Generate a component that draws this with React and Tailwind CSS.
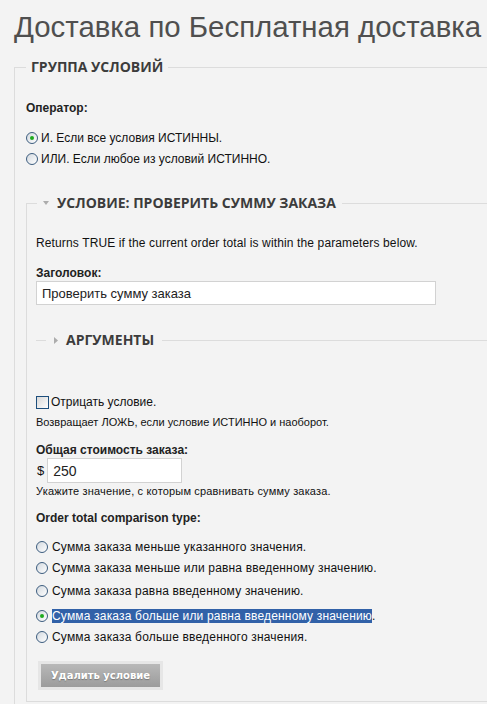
import React from "react";

function Radio({ checked }) {
    return (
        <span className="flex h-[12px] w-[12px] shrink-0 items-center justify-center rounded-full border border-[#3d5d7f] bg-linear-to-br from-[#d3d9df] to-white">
            {checked && <span className="h-[4px] w-[4px] rounded-full bg-[#1faa1f]" />}
        </span>
    );
}

function Legend({ children, arrow, className = "" }) {
    return (
        <legend className={`flex items-center font-['Open_Sans',sans-serif] text-[14px] leading-[16px] font-bold text-[#3c3c3c] ${className}`}>
            {arrow === "down" && (
                <svg width="6" height="4" viewBox="0 0 6 4" className="mr-[8px]">
                    <path d="M0 0h6L3 4z" fill="#acacac" />
                </svg>
            )}
            {arrow === "right" && (
                <svg width="4" height="7" viewBox="0 0 4 7" className="mr-[8px]">
                    <path d="M0 0l4 3.5L0 7z" fill="#acacac" />
                </svg>
            )}
            {children}
        </legend>
    );
}

const options = [
    { label: "Сумма заказа меньше указанного значения.", mt: "mt-[13px]" },
    { label: "Сумма заказа меньше или равна введенному значению.", mt: "mt-[5px]" },
    { label: "Сумма заказа равна введенному значению.", mt: "mt-[7px]" },
    { label: "Сумма заказа больше или равна введенному значению", checked: true, mt: "mt-[9px]" },
    { label: "Сумма заказа больше введенного значения.", mt: "mt-[5px]" },
];

export default function App() {
    return (
        <div className="h-[704px] w-[487px] overflow-hidden bg-[#f3f3f3] font-['Liberation_Sans',Arial,sans-serif] text-[12px] text-[#111]">
            {/* Page title */}
            <h1 className="ml-[14px] pt-[11px] text-[29.4px] leading-[32px] whitespace-nowrap text-[#4f4f4f]">
                Доставка по Бесплатная доставка
            </h1>

            {/* Condition group */}
            <fieldset className="mt-[16px] ml-[14px] w-[520px] border border-r-0 border-[#dcdcdc] pl-[11px] pb-[40px]">
                <Legend className="px-[5px]">ГРУППА УСЛОВИЙ</Legend>

                <p className="mt-[25px] leading-[16px] font-bold text-[#222]">Оператор:</p>
                <div className="mt-[13px] flex h-[18px] items-center gap-[3px]">
                    <Radio checked />
                    <span>И. Если все условия ИСТИННЫ.</span>
                </div>
                <div className="mt-[3px] flex h-[18px] items-center gap-[3px]">
                    <Radio />
                    <span>ИЛИ. Если любое из условий ИСТИННО.</span>
                </div>

                {/* Single condition */}
                <fieldset className="mt-[27px] w-[480px] border border-r-0 border-[#dcdcdc] pl-[9px] pb-[11px]">
                    <Legend arrow="down" className="ml-[1px] px-[6px]">УСЛОВИЕ: ПРОВЕРИТЬ СУММУ ЗАКАЗА</Legend>

                    <p className="mt-[24px] leading-[16px] tracking-[0.13px]">Returns TRUE if the current order total is within the parameters below.</p>

                    <p className="mt-[14px] leading-[16px] font-bold text-[#222]">Заголовок:</p>
                    <input
                        readOnly
                        value="Проверить сумму заказа"
                        className="block h-[24px] w-[400px] border border-[#d2d2d2] bg-white px-[5px] text-[13px] text-[#222] outline-none"
                    />

                    <fieldset className="mt-[27px] border-t border-[#dcdcdc]">
                        <Legend arrow="right" className="ml-[10px] px-[8px]">АРГУМЕНТЫ</Legend>
                    </fieldset>

                    <div className="mt-[46px] flex h-[16px] items-center gap-[2px]">
                        <span className="h-[13px] w-[13px] shrink-0 border border-[#1d4e7c] bg-linear-to-br from-[#d8d8d8] to-white" />
                        <span>Отрицать условие.</span>
                    </div>
                    <p className="mt-[5px] text-[11px] leading-[14px]">Возвращает ЛОЖЬ, если условие ИСТИННО и наоборот.</p>

                    <p className="mt-[14px] leading-[15px] font-bold text-[#222]">Общая стоимость заказа:</p>
                    <div className="flex items-center gap-[3px] pl-[1px]">
                        <span className="text-[13px]">$</span>
                        <input
                            readOnly
                            value="250"
                            className="block h-[25px] w-[135px] border border-[#d2d2d2] bg-white px-[5px] text-[14px] text-[#222] outline-none"
                        />
                    </div>
                    <p className="mt-[1px] text-[11px] leading-[14px] tracking-[0.17px]">Укажите значение, с которым сравнивать сумму заказа.</p>

                    <p className="mt-[12px] leading-[16px] font-bold text-[#222]">Order total comparison type:</p>
                    {options.map((o) => (
                        <div key={o.label} className={`${o.mt} flex h-[16px] items-center gap-[4px] tracking-[0.18px]`}>
                            <Radio checked={o.checked} />
                            {o.checked ? (
                                <span>
                                    <span className="bg-[#3161a8] text-white">{o.label}</span>.
                                </span>
                            ) : (
                                <span>{o.label}</span>
                            )}
                        </div>
                    ))}

                    <div className="mt-[16px] ml-[2px] w-[125px] bg-[#e6e6e6] p-[3px]">
                        <button className="block h-[23px] w-full bg-linear-to-b from-[#b8b8b8] to-[#9c9c9c] font-['DejaVu_Sans',sans-serif] text-[10px] font-bold text-white [text-shadow:0_1px_1px_#777]">
                            Удалить условие
                        </button>
                    </div>
                </fieldset>
            </fieldset>
        </div>
    );
}
